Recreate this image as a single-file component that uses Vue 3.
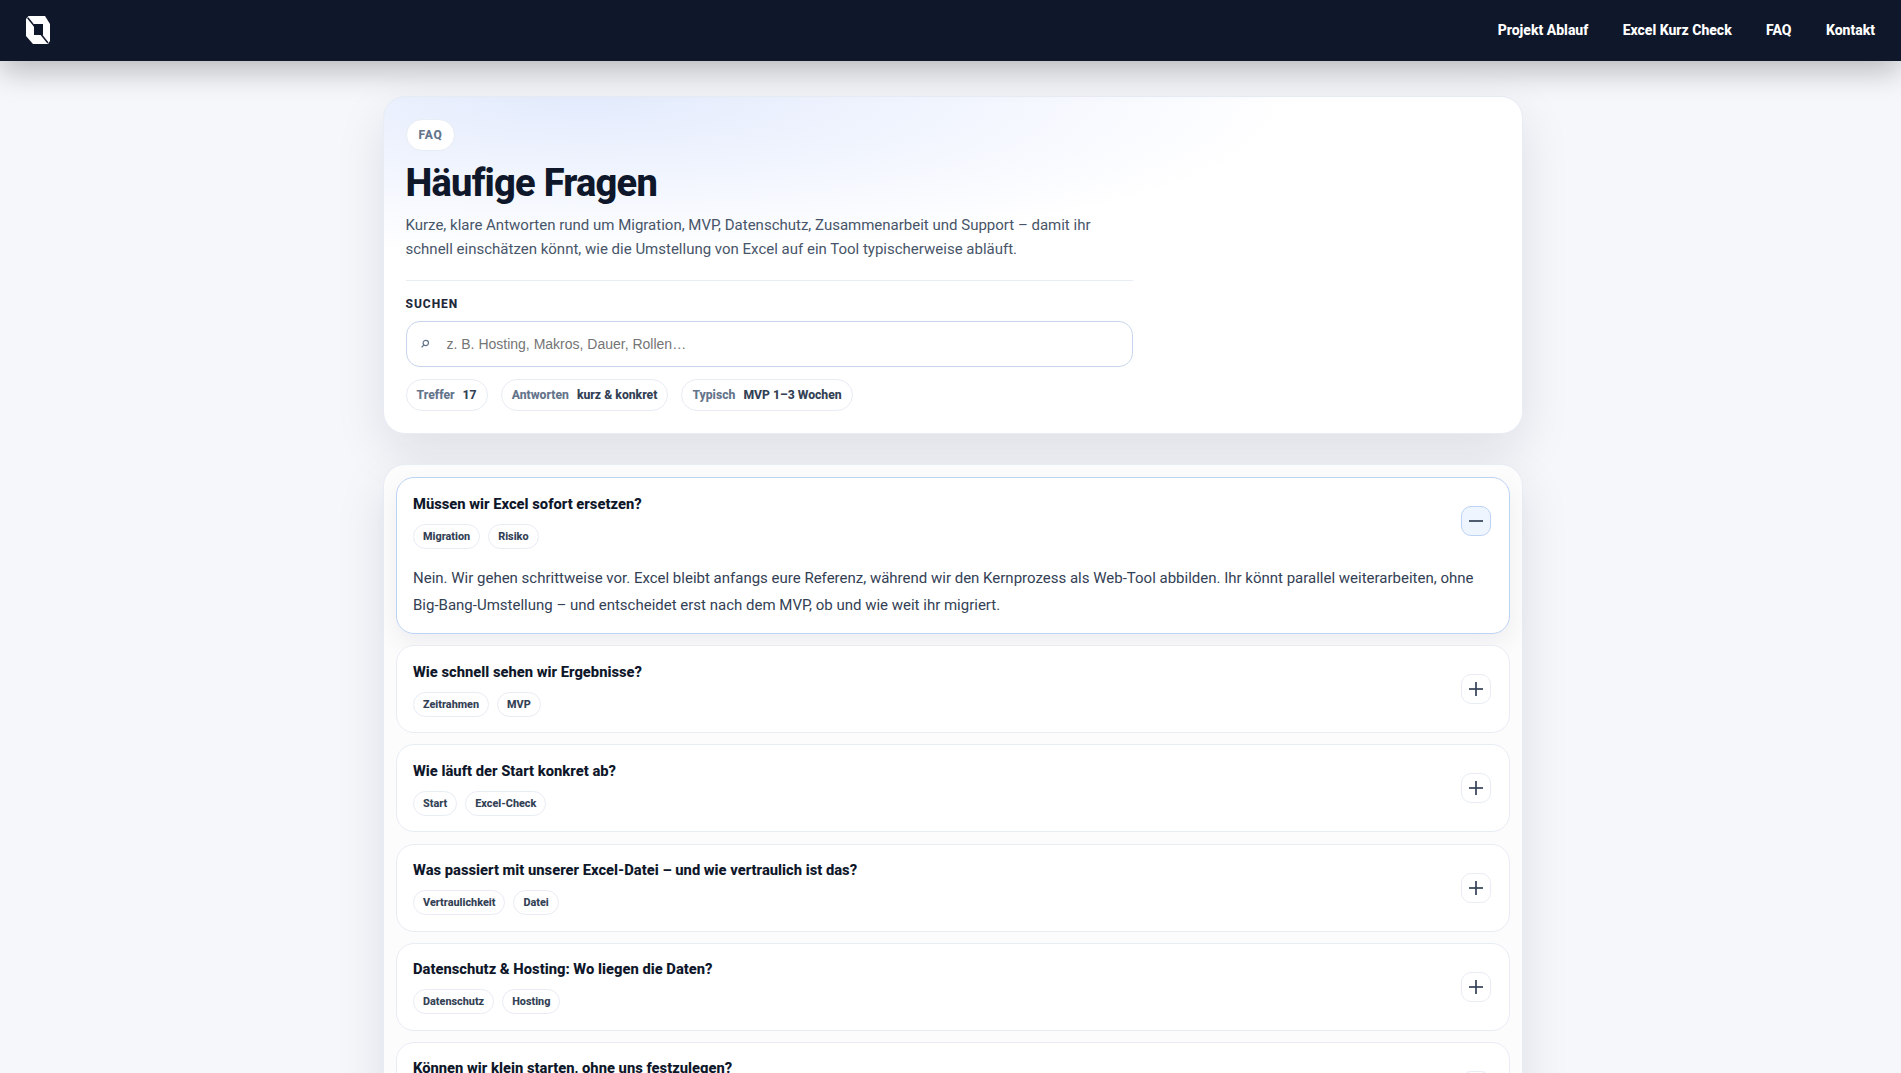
<template>
  <div class="page">
    <header class="topbar">
      <a class="logo" href="#" aria-label="Logo">
        <svg width="24" height="28" viewBox="0 0 24 28">
          <path d="M2.5 0H19L24 8V25L22 28H7L0 20V3Z" fill="#fff" />
          <rect x="8" y="8" width="9" height="11" fill="#0f172a" />
          <path d="M1.7 1.7L22 27" stroke="#0f172a" stroke-width="1.5" fill="none" />
        </svg>
      </a>
      <nav class="nav">
        <a v-for="link in links" :key="link" href="#">{{ link }}</a>
      </nav>
    </header>

    <main class="wrap">
      <section class="hero">
        <div class="hero-inner">
          <span class="eyebrow">FAQ</span>
          <h1>Häufige Fragen</h1>
          <p class="lead">
            Kurze, klare Antworten rund um Migration, MVP, Datenschutz, Zusammenarbeit und Support – damit ihr
            schnell einschätzen könnt, wie die Umstellung von Excel auf ein Tool typischerweise abläuft.
          </p>
          <div class="divider"></div>
          <label class="search-label" for="faq-search">SUCHEN</label>
          <div class="search">
            <svg class="search-icon" width="10" height="10" viewBox="0 0 10 10">
              <circle cx="5.8" cy="4" r="2.7" fill="none" stroke="#64748b" stroke-width="1.2" />
              <path d="M3.8 6L1.6 8.4" stroke="#64748b" stroke-width="1.2" />
            </svg>
            <input id="faq-search" v-model="query" placeholder="z. B. Hosting, Makros, Dauer, Rollen…" />
          </div>
          <div class="stats">
            <div v-for="s in stats" :key="s.label" class="stat">
              <span>{{ s.label }}</span><b>{{ s.value }}</b>
            </div>
          </div>
        </div>
      </section>

      <section class="list">
        <article v-for="(item, i) in items" :key="item.q" class="item" :class="{ open: openIndex === i }" @click="toggle(i)">
          <div class="item-head">
            <div>
              <h2>{{ item.q }}</h2>
              <div class="tags">
                <span v-for="t in item.tags" :key="t" class="tag">{{ t }}</span>
              </div>
            </div>
            <button class="toggle" type="button" :aria-label="openIndex === i ? 'Schließen' : 'Öffnen'">
              <svg width="16" height="16" viewBox="0 0 16 16">
                <path d="M1 8H15" stroke="#334155" stroke-width="1.7" />
                <path v-if="openIndex !== i" d="M8 1V15" stroke="#334155" stroke-width="1.7" />
              </svg>
            </button>
          </div>
          <p v-if="openIndex === i" class="answer">{{ item.a }}</p>
        </article>
      </section>
    </main>
  </div>
</template>

<script setup>
import { ref } from 'vue'

const query = ref('')
const openIndex = ref(0)

const links = ['Projekt Ablauf', 'Excel Kurz Check', 'FAQ', 'Kontakt']

const stats = [
  { label: 'Treffer', value: '17' },
  { label: 'Antworten', value: 'kurz & konkret' },
  { label: 'Typisch', value: 'MVP 1–3 Wochen' }
]

const items = [
  {
    q: 'Müssen wir Excel sofort ersetzen?',
    tags: ['Migration', 'Risiko'],
    a: 'Nein. Wir gehen schrittweise vor. Excel bleibt anfangs eure Referenz, während wir den Kernprozess als Web-Tool abbilden. Ihr könnt parallel weiterarbeiten, ohne Big-Bang-Umstellung – und entscheidet erst nach dem MVP, ob und wie weit ihr migriert.'
  },
  { q: 'Wie schnell sehen wir Ergebnisse?', tags: ['Zeitrahmen', 'MVP'] },
  { q: 'Wie läuft der Start konkret ab?', tags: ['Start', 'Excel-Check'] },
  { q: 'Was passiert mit unserer Excel-Datei – und wie vertraulich ist das?', tags: ['Vertraulichkeit', 'Datei'] },
  { q: 'Datenschutz & Hosting: Wo liegen die Daten?', tags: ['Datenschutz', 'Hosting'] },
  { q: 'Können wir klein starten, ohne uns festzulegen?', tags: ['MVP', 'Flexibilität'] }
]

function toggle(i) {
  openIndex.value = openIndex.value === i ? -1 : i
}
</script>

<style>
html, body {
  background: #f5f7fb;
}
body {
  overflow-x: hidden;
}
</style>

<style scoped>
.page {
  min-height: 100vh;
  font-family: Roboto, "Liberation Sans", sans-serif;
  color: #0f172a;
  background: #f5f7fb;
}

.topbar {
  position: sticky;
  top: 0;
  z-index: 5;
  height: 61px;
  padding: 0 26px 1px;
  box-sizing: border-box;
  display: flex;
  align-items: center;
  justify-content: space-between;
  background: #0f172a;
  box-shadow: 0 10px 30px rgba(0, 0, 0, 0.25);
}
.logo {
  display: flex;
}
.nav {
  display: flex;
  gap: 34.4px;
}
.nav a {
  color: #fff;
  font-size: 14px;
  font-weight: 800;
  text-decoration: none;
}

.wrap {
  width: 1139.5px;
  margin-left: 383px;
  padding: 34.5px 0 40px;
  display: flex;
  flex-direction: column;
  gap: 30.5px;
}

.hero {
  height: 338px;
  box-sizing: border-box;
  padding: 22.5px 21px 22px 21.5px;
  background:
    radial-gradient(720px 160px at 200px 0, rgba(37, 99, 235, 0.13), transparent),
    #fff;
  border: 1px solid #e8ecf4;
  border-radius: 22px;
  box-shadow: 0 18px 50px rgba(15, 23, 42, 0.1);
}
.hero-inner {
  width: 727.5px;
}
.eyebrow {
  display: inline-block;
  padding: 0 12px;
  line-height: 30px;
  font-size: 12px;
  font-weight: 800;
  letter-spacing: 0.06em;
  color: #64748b;
  background: #fff;
  border: 1px solid #e8ecf4;
  border-radius: 999px;
}
h1 {
  margin: 9px 0 0;
  font-size: 38px;
  line-height: 46px;
  font-weight: 800;
  letter-spacing: -0.02em;
  color: #0f172a;
}
.lead {
  margin: 7px 0 0;
  font-size: 15px;
  line-height: 24px;
  color: #475569;
}
.divider {
  height: 1px;
  margin: 19px 0 15px;
  background: #e8ecf4;
}
.search-label {
  display: block;
  font-size: 12px;
  font-weight: 800;
  letter-spacing: 0.08em;
  line-height: 16px;
  color: #1e293b;
}
.search {
  display: flex;
  align-items: center;
  height: 46px;
  margin-top: 9px;
  padding: 0 13px;
  gap: 17px;
  box-sizing: border-box;
  background: #fff;
  border: 1px solid #c7d6ec;
  border-radius: 14px;
}
.search-icon {
  flex: none;
}
.search input {
  flex: 1;
  border: 0;
  outline: 0;
  padding: 0;
  font-family: "Liberation Sans", Arial, sans-serif;
  font-size: 14px;
  color: #0f172a;
  background: transparent;
}
.search input::placeholder {
  color: #757575;
}
.stats {
  display: flex;
  gap: 13px;
  margin-top: 12px;
}
.stat {
  display: flex;
  gap: 8px;
  padding: 0 10px;
  line-height: 30px;
  font-size: 12.2px;
  font-weight: 800;
  background: #fff;
  border: 1px solid #e8ecf4;
  border-radius: 999px;
}
.stat span {
  color: #64748b;
}
.stat b {
  font-weight: 800;
  color: #334155;
}

.list {
  padding: 12px;
  display: flex;
  flex-direction: column;
  gap: 11.2px;
  background: #fcfcfd;
  border: 1px solid #e8ecf4;
  border-radius: 22px;
  box-shadow: 0 18px 50px rgba(15, 23, 42, 0.1);
}
.item {
  padding: 15.5px 18px 15.5px 16px;
  box-sizing: border-box;
  background: #fff;
  border: 1px solid #e8ecf4;
  border-radius: 18px;
  cursor: pointer;
}
.item.open {
  border-color: #bcd3f5;
  box-shadow: 0 10px 24px rgba(15, 23, 42, 0.06);
}
.item-head {
  display: flex;
  align-items: center;
  justify-content: space-between;
  gap: 16px;
}
h2 {
  margin: 0;
  font-size: 14.75px;
  line-height: 20px;
  font-weight: 800;
  color: #0f172a;
}
.tags {
  display: flex;
  gap: 8px;
  margin-top: 10px;
}
.tag {
  padding: 0 9px;
  line-height: 23px;
  font-size: 10.85px;
  font-weight: 800;
  color: #334155;
  background: #fff;
  border: 1px solid #e8ecf4;
  border-radius: 999px;
}
.toggle {
  flex: none;
  display: flex;
  align-items: center;
  justify-content: center;
  width: 30px;
  height: 30px;
  padding: 0;
  background: #fff;
  border: 1px solid #e8ecf4;
  border-radius: 10px;
  cursor: pointer;
}
.open .toggle {
  background: #eff5fe;
  border-color: #bcd3f5;
}
.answer {
  margin: 16px 0 -1px;
  font-size: 15px;
  line-height: 27px;
  color: #334155;
}
</style>
